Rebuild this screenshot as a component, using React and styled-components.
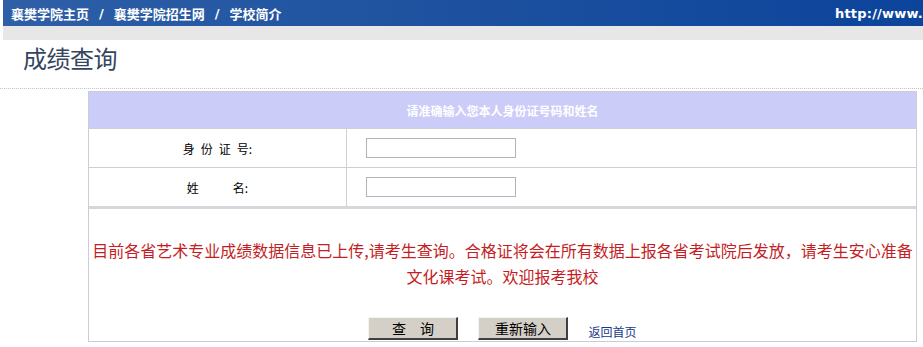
import { createGlobalStyle, styled } from 'styled-components';

const GlobalStyle = createGlobalStyle`
  body {
    margin: 0;
    background: #fff;
    font-family: "Noto Sans CJK SC", "DejaVu Sans", sans-serif;
    font-size: 12px;
  }
`;

const TopBar = styled.div`
  margin-left: 3px;
  height: 26px;
  display: flex;
  align-items: center;
  justify-content: space-between;
  overflow: hidden;
  background: linear-gradient(to right, #2e5fa7, #1d519f 50%, #0c449c);
  color: #fff;
  font-weight: bold;
  font-size: 13px;
`;

const Nav = styled.div`
  display: flex;
  align-items: center;
  padding-left: 8px;
`;

const NavLink = styled.a`
  color: #fff;
  text-decoration: none;
`;

const Sep = styled.span`
  margin: 0 10px;
  font-family: "DejaVu Sans", sans-serif;
`;

const Url = styled.span`
  font-family: "DejaVu Sans", sans-serif;
  white-space: nowrap;
  letter-spacing: 0.2px;
`;

const GreyBand = styled.div`
  margin-left: 3px;
  height: 14px;
  background: #e7e7e7;
`;

const TitleRow = styled.div`
  height: 45px;
  padding: 3px 0 0 23px;
  border-bottom: 1px dotted #c4c4c4;
`;

const Title = styled.h1`
  margin: 0;
  font-size: 24px;
  line-height: 30px;
  font-weight: normal;
  color: #34465e;
  letter-spacing: -0.5px;
`;

const Form = styled.div`
  margin: 2px 0 0 88px;
  width: 829px;
  box-sizing: border-box;
  border: 1px solid #ccccd4;
`;

const Head = styled.div`
  height: 36px;
  background: #ccccf8;
  color: #fff;
  font-weight: bold;
  font-size: 12px;
  display: flex;
  align-items: center;
  justify-content: center;
`;

const Row = styled.div`
  display: grid;
  grid-template-columns: 258px 1fr;
  height: 38px;
  border-top: 1px solid #cfcfd4;
`;

const LabelCell = styled.div`
  border-right: 1px solid #cfcfd4;
  display: flex;
  align-items: center;
  justify-content: center;
  gap: ${(p) => p.$gap}px;
  color: #000;
  font-size: 12px;
`;

const InputCell = styled.div`
  display: flex;
  align-items: center;
  padding-left: 19px;
`;

const TextInput = styled.input`
  width: 150px;
  height: 20px;
  box-sizing: border-box;
  border: 1px solid #b4b4b8;
  margin: 0;
  padding: 0 3px;
`;

const Message = styled.div`
  border-top: 3px solid #d6d6dc;
  padding: 28px 0 1px;
  display: flex;
  flex-direction: column;
  align-items: center;
`;

const Notice = styled.p`
  margin: 0;
  text-align: center;
  white-space: nowrap;
  color: #c41e24;
  font-size: 16px;
  line-height: 26px;
`;

const Actions = styled.div`
  margin-top: 28px;
  display: flex;
  align-items: flex-end;
  gap: 20px;
`;

const Button = styled.button`
  width: 90px;
  height: 23px;
  padding: 0;
  background: #d4d0c8;
  border-style: solid;
  border-width: 1px 2px 2px 1px;
  border-color: #f4f4f4 #404040 #404040 #f4f4f4;
  font-family: "Noto Sans CJK SC", sans-serif;
  font-size: 14px;
  color: #000;
  line-height: 1;
`;

const BackLink = styled.a`
  color: #17388c;
  text-decoration: none;
  font-size: 12px;
  line-height: 14px;
  margin-bottom: 1px;
`;

export default function App() {
  return (
    <>
      <GlobalStyle />
      <TopBar>
        <Nav>
          <NavLink href="#">襄樊学院主页</NavLink>
          <Sep>/</Sep>
          <NavLink href="#">襄樊学院招生网</NavLink>
          <Sep>/</Sep>
          <NavLink href="#">学校简介</NavLink>
        </Nav>
        <Url>http://www.</Url>
      </TopBar>
      <GreyBand />
      <TitleRow>
        <Title>成绩查询</Title>
      </TitleRow>
      <Form>
        <Head>请准确输入您本人身份证号码和姓名</Head>
        <Row>
          <LabelCell $gap={6}>
            <span>身</span>
            <span>份</span>
            <span>证</span>
            <span>号:</span>
          </LabelCell>
          <InputCell>
            <TextInput type="text" />
          </InputCell>
        </Row>
        <Row>
          <LabelCell $gap={34}>
            <span>姓</span>
            <span>名:</span>
          </LabelCell>
          <InputCell>
            <TextInput type="text" />
          </InputCell>
        </Row>
        <Message>
          <Notice>
            目前各省艺术专业成绩数据信息已上传,请考生查询。合格证将会在所有数据上报各省考试院后发放，请考生安心准备
            <br />
            文化课考试。欢迎报考我校
          </Notice>
          <Actions>
            <Button type="button">查　询</Button>
            <Button type="button">重新输入</Button>
            <BackLink href="#">返回首页</BackLink>
          </Actions>
        </Message>
      </Form>
    </>
  );
}
